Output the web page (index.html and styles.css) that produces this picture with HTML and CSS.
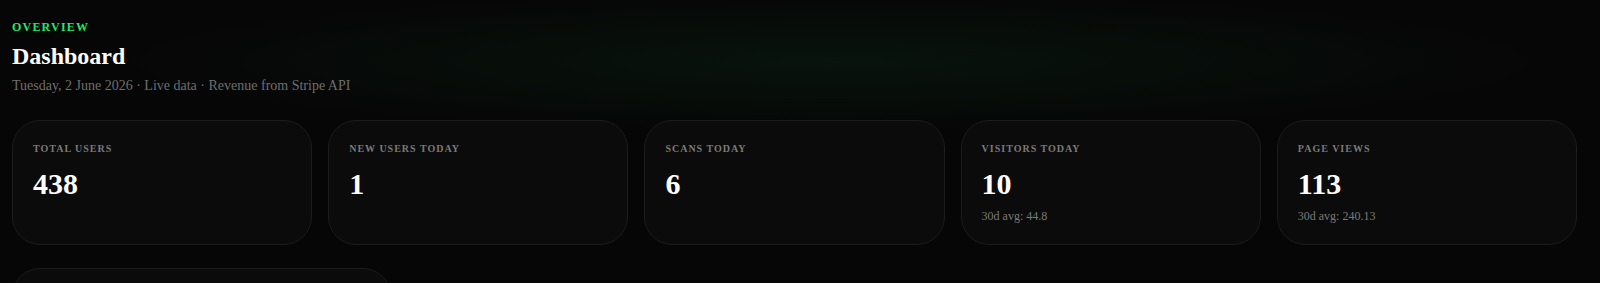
FILE: index.html
```html
<!DOCTYPE html>
<html lang="en">
<head>
  <meta charset="UTF-8">
  <title>Dashboard</title>
  <link rel="stylesheet" href="styles.css">
</head>
<body>
  <main class="page">
    <header class="head">
      <div class="eyebrow">Overview</div>
      <h1 class="title">Dashboard</h1>
      <p class="meta">Tuesday, 2 June 2026 · Live data · Revenue from Stripe API</p>
    </header>

    <section class="stats">
      <div class="card">
        <div class="label">Total users</div>
        <div class="value">438</div>
      </div>
      <div class="card">
        <div class="label">New users today</div>
        <div class="value">1</div>
      </div>
      <div class="card">
        <div class="label">Scans today</div>
        <div class="value">6</div>
      </div>
      <div class="card">
        <div class="label">Visitors today</div>
        <div class="value">10</div>
        <div class="sub">30d avg: 44.8</div>
      </div>
      <div class="card">
        <div class="label">Page views</div>
        <div class="value">113</div>
        <div class="sub">30d avg: 240.13</div>
      </div>
    </section>

    <section class="stats stats-4">
      <div class="card card-tall"></div>
    </section>
  </main>
</body>
</html>
```

FILE: styles.css
```css
html {
  box-sizing: border-box;
  background: #060606;
}

*, *:before, *:after {
  box-sizing: inherit;
}

body {
  margin: 0;
  min-height: 100vh;
  font-family: "Liberation Serif", "Times New Roman", serif;
  color: #fff;
  background: radial-gradient(ellipse 720px 70px at 52% 62px, rgba(30, 200, 100, 0.07), rgba(30, 200, 100, 0) 100%), #060606;
}

.page {
  padding: 20px 23px 24px 12px;
}

.head {
  margin-bottom: 26px;
}

.eyebrow {
  font-size: 12px;
  font-weight: bold;
  text-transform: uppercase;
  letter-spacing: 0.1em;
  color: #1fe86c;
}

.title {
  margin: 8px 0 0;
  font-size: 24px;
  line-height: normal;
}

.meta {
  margin: 8px 0 0;
  font-size: 14px;
  color: #6e6e6e;
}

.stats {
  display: grid;
  grid-template-columns: repeat(5, 1fr);
  gap: 16px;
}

.stats-4 {
  grid-template-columns: repeat(4, 1fr);
  margin-top: 23px;
}

.card {
  background: #0b0b0b;
  border: 1px solid #1c1c1c;
  border-radius: 28px;
  padding: 22px 20px 20px;
}

.card-tall {
  height: 200px;
}

.label {
  font-size: 10px;
  font-weight: bold;
  text-transform: uppercase;
  letter-spacing: 0.1em;
  color: #7a7a7a;
}

.value {
  margin-top: 13px;
  font-size: 30px;
  font-weight: bold;
}

.sub {
  margin-top: 8px;
  font-size: 12px;
  color: #7a7a7a;
}
```
